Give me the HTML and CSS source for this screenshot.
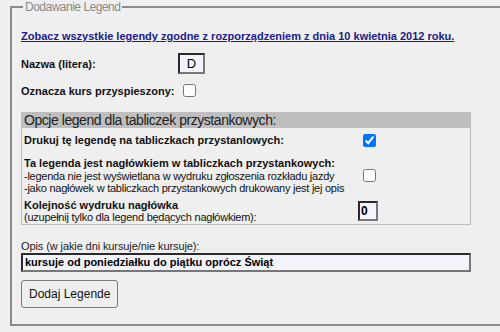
FILE: index.html
```html
<!DOCTYPE html>
<html lang="pl">
<head>
  <meta charset="UTF-8">
  <title>Dodawanie Legend</title>
  <link rel="stylesheet" href="styles.css">
</head>
<body>
  <fieldset class="panel">
    <legend>Dodawanie Legend</legend>

    <a class="rules-link" href="#">Zobacz wszystkie legendy zgodne z rozporządzeniem z dnia 10 kwietnia 2012 roku.</a>

    <div class="field-row first">
      <label for="nazwa">Nazwa (litera):</label>
      <input type="text" id="nazwa" class="txt letter" value="D">
    </div>
    <div class="field-row">
      <label for="przysp">Oznacza kurs przyspieszony:</label>
      <input type="checkbox" id="przysp">
    </div>

    <div class="options">
      <div class="options-title">Opcje legend dla tabliczek przystankowych:</div>
      <div class="opt-row">
        <label for="drukuj"><b>Drukuj tę legendę na tabliczkach przystanlowych:</b></label>
        <input type="checkbox" id="drukuj" checked>
      </div>
      <div class="opt-row">
        <label for="naglowek">
          <b>Ta legenda jest nagłówkiem w tabliczkach przystankowych:</b><br>
          -legenda nie jest wyświetlana w wydruku zgłoszenia rozkładu jazdy<br>
          -jako nagłówek w tabliczkach przystankowych drukowany jest jej opis
        </label>
        <input type="checkbox" id="naglowek">
      </div>
      <div class="opt-row">
        <label for="kolejnosc">
          <b>Kolejność wydruku nagłówka</b><br>
          (uzupełnij tylko dla legend będących nagłówkiem):
        </label>
        <input type="text" id="kolejnosc" class="txt order" value="0">
      </div>
    </div>

    <label for="opis" class="opis-label">Opis (w jakie dni kursuje/nie kursuje):</label>
    <input type="text" id="opis" class="txt wide" value="kursuje od poniedziałku do piątku oprócz Świąt">

    <div class="btn-wrap">
      <button type="button">Dodaj Legende</button>
    </div>
  </fieldset>
</body>
</html>
```

FILE: styles.css
```css
body {
  margin: 0 0 0 10px;
  background-color: #efefef;
  font-family: "Liberation Sans", Arial, sans-serif;
  font-size: 11px;
  color: #111;
}
.panel {
  width: 620px;
  margin: 0;
  padding: 6px 9px 16px 9px;
  border: 1px solid #8c8c8c;
  border-width: 2px 1px 2px 2px;
}
.panel legend {
  color: #8a8a8a;
  font-size: 12px;
  letter-spacing: -0.5px;
  padding: 0 2px;
  margin-left: 2px;
}
.rules-link {
  display: block;
  margin-top: 10px;
  color: #1c1c8c;
  font-weight: bold;
}
.field-row {
  display: grid;
  grid-template-columns: 157px auto;
  align-items: center;
  justify-items: start;
  font-weight: bold;
  margin-top: 7px;
}
.field-row.first {
  margin-top: 11px;
}
input[type=checkbox] {
  margin: 3px 3px 3px 5px;
}
.txt {
  font-family: "Liberation Sans", Arial, sans-serif;
  border: 2px solid;
  border-color: #2a2a2a #777 #777 #2a2a2a;
  background-color: #f3f3fc;
  color: #000;
  padding: 0;
}
.letter {
  width: 23px;
  height: 17px;
  text-align: center;
  font-size: 13px;
}
.options {
  width: 448px;
  margin-top: 12px;
  border: 1px solid #bdbdbd;
  border-top: none;
  letter-spacing: -0.25px;
  line-height: 12.5px;
}
.options b {
  letter-spacing: 0;
}
.options-title {
  background-color: #bebebe;
  font-size: 14px;
  letter-spacing: -0.45px;
  padding: 0 2px;
  height: 16px;
  line-height: 16px;
  color: #222;
}
.opt-row {
  display: grid;
  grid-template-columns: 334px auto;
  align-items: center;
  justify-items: start;
  padding: 0 2px;
  margin-top: 3px;
}
.opt-row + .opt-row {
  margin-top: 7px;
}
.opt-row:last-child {
  margin-top: 4px;
}
.order {
  width: 16px;
  height: 16px;
  font-size: 12px;
  font-weight: bold;
  text-indent: 1px;
}
.opis-label {
  display: block;
  margin-top: 15px;
  font-size: 11px;
  letter-spacing: -0.1px;
  color: #222;
}
.wide {
  display: block;
  box-sizing: border-box;
  width: 450px;
  height: 19px;
  margin-top: 1px;
  font-size: 11px;
  font-weight: bold;
  padding-left: 2px;
}
.btn-wrap {
  margin-top: 8px;
}
button {
  font-family: "Liberation Sans", Arial, sans-serif;
  font-size: 12px;
  padding: 6px 7px;
  background-color: #efefef;
  border: 1px solid #7a7a7a;
  border-radius: 3px;
  color: #111;
}
```
